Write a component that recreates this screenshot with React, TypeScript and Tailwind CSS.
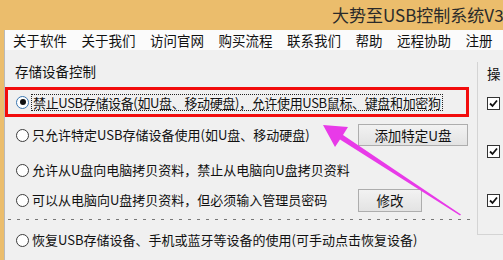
import React from "react";

function Radio({ checked }: { checked?: boolean }) {
  return checked ? (
    <span className="w-[13px] h-[13px] shrink-0 rounded-full border border-[#3a76b0] bg-white flex items-center justify-center">
      <span className="w-[6px] h-[6px] rounded-full bg-[#111]" />
    </span>
  ) : (
    <span className="w-[13px] h-[13px] shrink-0 rounded-full border border-[#3c3c3c] bg-white" />
  );
}

function Check() {
  return (
    <span className="w-[13px] h-[13px] border border-[#333] bg-white flex items-center justify-center">
      <svg width="9" height="9" viewBox="0 0 9 9">
        <path d="M1 4.5 L3.5 7 L8 1.5" fill="none" stroke="#111" strokeWidth="1.8" />
      </svg>
    </span>
  );
}

function Btn({ label, w }: { label: string; w: string }) {
  return (
    <div
      className={`${w} flex items-center justify-center border border-[#adadad] bg-[linear-gradient(#f2f2f2,#e3e3e3)] text-[13.5px] text-[#111]`}
    >
      {label}
    </div>
  );
}

export default function App() {
  const menu = ["关于软件", "关于我们", "访问官网", "购买流程", "联系我们", "帮助", "远程协助", "注册"];
  return (
    <div className="relative w-[503px] h-[260px] overflow-hidden bg-[#ebbd6c] font-['Noto_Sans_CJK_SC','Noto_Sans',sans-serif] text-[#111] leading-[16px]">
      <div className="h-[30px] flex items-center pl-[332px] text-[17px] text-[#2a2a2a] whitespace-nowrap">
        大势至USB控制系统V3
      </div>
      <div className="ml-[4px] h-[230px] bg-[#f0f0f0] border-l border-[#b9b9b9] flex flex-col">
        <div className="h-[20px] shrink-0 bg-[#fbfbfb] flex items-center pl-[8px] gap-[14.5px] text-[13.5px] whitespace-nowrap">
          {menu.map((m) => (
            <span key={m}>{m}</span>
          ))}
        </div>
        <div className="flex flex-1">
          <div className="w-[472px] shrink-0 flex flex-col text-[13px] whitespace-nowrap">
            <div className="h-[37px] pt-[5px] pl-[10px] flex items-center text-[13.5px]">存储设备控制</div>
            <div className="h-[30px] w-[464px] border-[3px] border-[#f20c0c] flex items-center pl-[8px]">
              <Radio checked />
              <span className="ml-[2px] px-[1px] border border-dotted border-[#222] leading-[15px] tracking-[-0.35px]">
                禁止USB存储设备(如U盘、移动硬盘)，允许使用USB鼠标、键盘和加密狗
              </span>
            </div>
            <div className="h-[36px] flex items-center">
              <div className="w-[353px] flex items-center pl-[11px] gap-[3px]">
                <Radio />
                <span>只允许特定USB存储设备使用(如U盘、移动硬盘)</span>
              </div>
              <Btn label="添加特定U盘" w="w-[110px] h-[22px]" />
            </div>
            <div className="h-[34px] flex items-center pl-[11px] gap-[3px]">
              <Radio />
              <span>允许从U盘向电脑拷贝资料，禁止从电脑向U盘拷贝资料</span>
            </div>
            <div className="h-[26px] flex items-center">
              <div className="w-[353px] flex items-center pl-[11px] gap-[3px]">
                <Radio />
                <span>可以从电脑向U盘拷贝资料，但必须输入管理员密码</span>
              </div>
              <Btn label="修改" w="w-[64px] h-[23px]" />
            </div>
            <div className="mt-[6px] ml-[3px] w-[462px] h-[1px] shrink-0 bg-[linear-gradient(to_right,#777_3px,transparent_3px)] bg-[length:9px_1px]" />
            <div className="h-[40px] flex items-center pl-[11px] gap-[3px]">
              <Radio />
              <span>恢复USB存储设备、手机或蓝牙等设备的使用(可手动点击恢复设备)</span>
            </div>
          </div>
          <div className="mt-[12px] h-[173px] flex-1 border-l border-b border-[#d4d4d4] pl-[9px] flex flex-col text-[13.5px] overflow-hidden">
            <div className="h-[22px] flex items-center whitespace-nowrap">操</div>
            <div className="mt-[13px]">
              <Check />
            </div>
            <div className="mt-[35px]">
              <Check />
            </div>
            <div className="mt-[36px]">
              <Check />
            </div>
          </div>
        </div>
      </div>
      <svg className="absolute left-0 top-0 pointer-events-none" width="503" height="260" viewBox="0 0 503 260">
        <polygon
          points="323,125 348,127 343,135 461,214.5 460,215.5 340,139.5 335,147"
          fill="#e83ae8"
        />
      </svg>
    </div>
  );
}
